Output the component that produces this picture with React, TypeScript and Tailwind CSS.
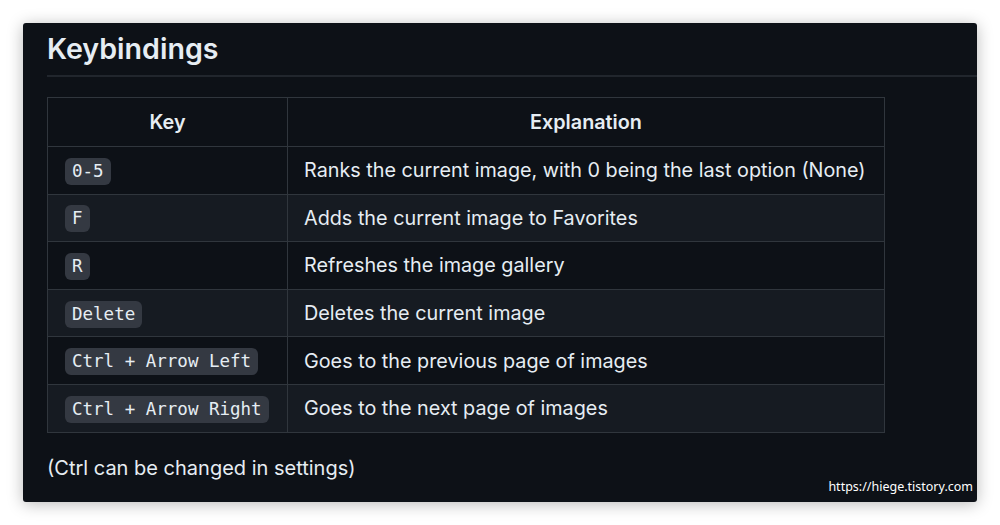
const rows: { key: string; text: string }[] = [
  { key: '0-5', text: 'Ranks the current image, with 0 being the last option (None)' },
  { key: 'F', text: 'Adds the current image to Favorites' },
  { key: 'R', text: 'Refreshes the image gallery' },
  { key: 'Delete', text: 'Deletes the current image' },
  { key: 'Ctrl + Arrow Left', text: 'Goes to the previous page of images' },
  { key: 'Ctrl + Arrow Right', text: 'Goes to the next page of images' },
]

function KeyBadge({ label }: { label: string }) {
  return (
    <code className="inline-block rounded-[6px] bg-[#343942] px-[7px] py-[1px] font-['DejaVu_Sans_Mono',monospace] text-[17.5px] leading-[25px] text-[#e6edf3] whitespace-pre">
      {label}
    </code>
  )
}

export default function App() {
  return (
    <div className="h-[525px] w-[1000px] bg-white p-[23px] font-['Inter',sans-serif]">
      <div className="relative h-[479px] w-[954px] overflow-hidden rounded-[3px] bg-[#0d1117] pl-[24px] pt-[8px] text-[#e6edf3] shadow-[0_2px_16px_rgba(0,0,0,0.28)]">
        <h2 className="border-b-2 border-[#21262d] pb-[9px] text-[28.6px] font-semibold leading-[35px]">
          Keybindings
        </h2>
        <table className="mt-[20px] w-[838px] table-fixed border-collapse text-[19.8px] leading-[28px]">
          <thead>
            <tr className="h-[49px] bg-[#0d1117]">
              <th className="w-[240px] border border-[#30363d] px-4 text-center font-semibold">Key</th>
              <th className="border border-[#30363d] px-4 text-center font-semibold">Explanation</th>
            </tr>
          </thead>
          <tbody>
            {rows.map((r, i) => (
              <tr key={r.key} className={i % 2 === 1 ? 'h-[47.6px] bg-[#161b22]' : 'h-[47.6px] bg-[#0d1117]'}>
                <td className="border border-[#30363d] pl-[17px] pr-2 whitespace-nowrap">
                  <KeyBadge label={r.key} />
                </td>
                <td className="border border-[#30363d] pl-[16px] pr-2 whitespace-nowrap">{r.text}</td>
              </tr>
            ))}
          </tbody>
        </table>
        <p className="mt-[20px] text-[20px] leading-[30px]">(Ctrl can be changed in settings)</p>
        <span className="absolute bottom-[7px] right-[4px] font-['Noto_Sans',sans-serif] text-[12.5px] leading-[16px] text-white">
          https://hiege.tistory.com
        </span>
      </div>
    </div>
  )
}
